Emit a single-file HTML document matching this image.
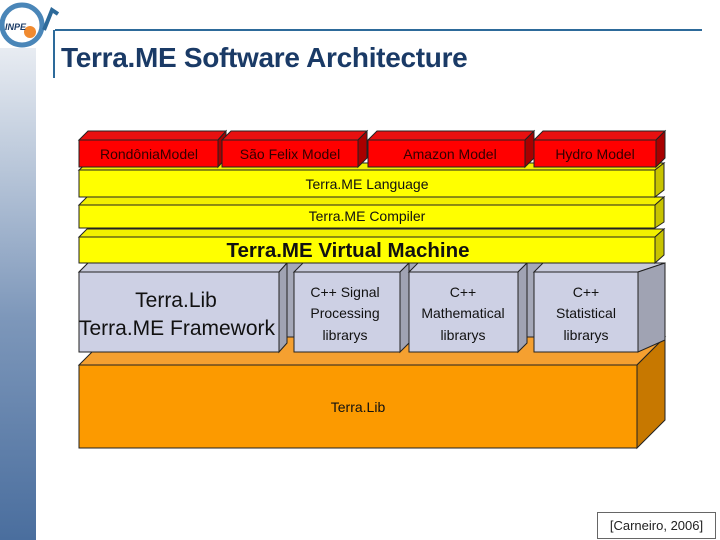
<!DOCTYPE html>
<html><head><meta charset="utf-8"><style>
body{margin:0;width:720px;height:540px;overflow:hidden;background:#fff;font-family:"Liberation Sans",sans-serif;position:relative}
.side{position:absolute;left:0;top:48px;width:36px;height:492px;background:linear-gradient(#e8ecf2,#7d97ba 55%,#4a6e9e)}
.t{position:absolute;left:61px;top:42px;font-size:28px;color:#1a3a66;font-weight:bold;letter-spacing:-0.3px}
.cite{position:absolute;left:597px;top:512px;width:117px;height:25px;border:1px solid #666;font-size:13px;line-height:25px;text-align:center;color:#222;background:#fff}
</style></head><body>
<div class="side"></div>
<svg style="position:absolute;left:0;top:0" width="720" height="540">
<line x1="55" y1="30" x2="702" y2="30" stroke="#2d6a9a" stroke-width="2"/>
<line x1="54" y1="30" x2="54" y2="78" stroke="#2d6a9a" stroke-width="2"/>
<circle cx="22" cy="25" r="20" fill="none" stroke="#4a86b8" stroke-width="5"/>
<circle cx="30" cy="32" r="6" fill="#f08a30"/>
<text x="5" y="30" font-size="9" font-style="italic" font-weight="bold" fill="#1a3a66">INPE</text>
<path d="M44 30 L52 10 L58 14" fill="none" stroke="#2d6a9a" stroke-width="4"/>
<g stroke="#222" stroke-width="1">
<polygon points="79,272 88,263 665,263 665,340 638,352 79,352" fill="#a5a8b8"/>
<polygon points="79,365 107,337 665,337 637,365" fill="#f5a030"/>
<polygon points="637,365 665,337 665,420 637,448" fill="#c77800"/>
<rect x="79" y="365" width="558" height="83" fill="#fc9a00"/>
<polygon points="79,272 88,263 287,263 279,272" fill="#c8cbdc"/>
<polygon points="279,272 287,263 287,343 279,352" fill="#a0a3b3"/>
<rect x="79" y="272" width="200" height="80" fill="#cdd0e4"/>
<polygon points="294,272 303,263 409,263 400,272" fill="#c8cbdc"/>
<polygon points="400,272 409,263 409,343 400,352" fill="#a0a3b3"/>
<rect x="294" y="272" width="106" height="80" fill="#cdd0e4"/>
<polygon points="409,272 418,263 527,263 518,272" fill="#c8cbdc"/>
<polygon points="518,272 527,263 527,343 518,352" fill="#a0a3b3"/>
<rect x="409" y="272" width="109" height="80" fill="#cdd0e4"/>
<polygon points="534,272 543,263 665,263 638,272" fill="#c8cbdc"/>
<polygon points="638,272 665,263 665,340 638,352" fill="#a0a3b3"/>
<rect x="534" y="272" width="104" height="80" fill="#cdd0e4"/>
<polygon points="79,237 87,229 664,229 655,237" fill="#f2f000"/>
<polygon points="655,237 664,229 664,255 655,263" fill="#c8c400"/>
<rect x="79" y="237" width="576" height="26" fill="#ffff00"/>
<polygon points="79,205 87,197 664,197 655,205" fill="#f2f000"/>
<polygon points="655,205 664,197 664,222 655,228" fill="#c8c400"/>
<rect x="79" y="205" width="576" height="23" fill="#ffff00"/>
<polygon points="79,170 87,163 664,163 655,170" fill="#f2f000"/>
<polygon points="655,170 664,163 664,190 655,197" fill="#c8c400"/>
<rect x="79" y="170" width="576" height="27" fill="#ffff00"/>
<polygon points="79,140 88,131 226,131 218,140" fill="#e81010"/>
<polygon points="218,140 226,131 226,158 218,167" fill="#a80000"/>
<rect x="79" y="140" width="139" height="27" fill="#ff0000"/>
<polygon points="222,140 231,131 367,131 358,140" fill="#e81010"/>
<polygon points="358,140 367,131 367,158 358,167" fill="#a80000"/>
<rect x="222" y="140" width="136" height="27" fill="#ff0000"/>
<polygon points="368,140 377,131 534,131 525,140" fill="#e81010"/>
<polygon points="525,140 534,131 534,158 525,167" fill="#a80000"/>
<rect x="368" y="140" width="157" height="27" fill="#ff0000"/>
<polygon points="534,140 543,131 665,131 656,140" fill="#e81010"/>
<polygon points="656,140 665,131 665,158 656,167" fill="#a80000"/>
<rect x="534" y="140" width="122" height="27" fill="#ff0000"/>
</g>
<g font-family="Liberation Sans,sans-serif" fill="#111" text-anchor="middle">
<g font-size="14" fill="#300"><text x="149" y="159">RondôniaModel</text><text x="290" y="159">São Felix Model</text><text x="450" y="159">Amazon Model</text><text x="595" y="159">Hydro Model</text></g>
<text x="367" y="189" font-size="14">Terra.ME Language</text>
<text x="367" y="221" font-size="14">Terra.ME Compiler</text>
<text x="348" y="257" font-size="20.5" font-weight="bold">Terra.ME Virtual Machine</text>
<text x="176" y="307" font-size="21">Terra.Lib</text>
<text x="177" y="335" font-size="21">Terra.ME Framework</text>
<g font-size="14"><text x="345" y="297">C++ Signal</text><text x="345" y="318">Processing</text><text x="345" y="340">librarys</text>
<text x="463" y="297">C++</text><text x="463" y="318">Mathematical</text><text x="463" y="340">librarys</text>
<text x="586" y="297">C++</text><text x="586" y="318">Statistical</text><text x="586" y="340">librarys</text>
<text x="358" y="412">Terra.Lib</text></g>
</g>
</svg>
<div class="t">Terra.ME Software Architecture</div>
<div class="cite">[Carneiro, 2006]</div>
</body></html>
